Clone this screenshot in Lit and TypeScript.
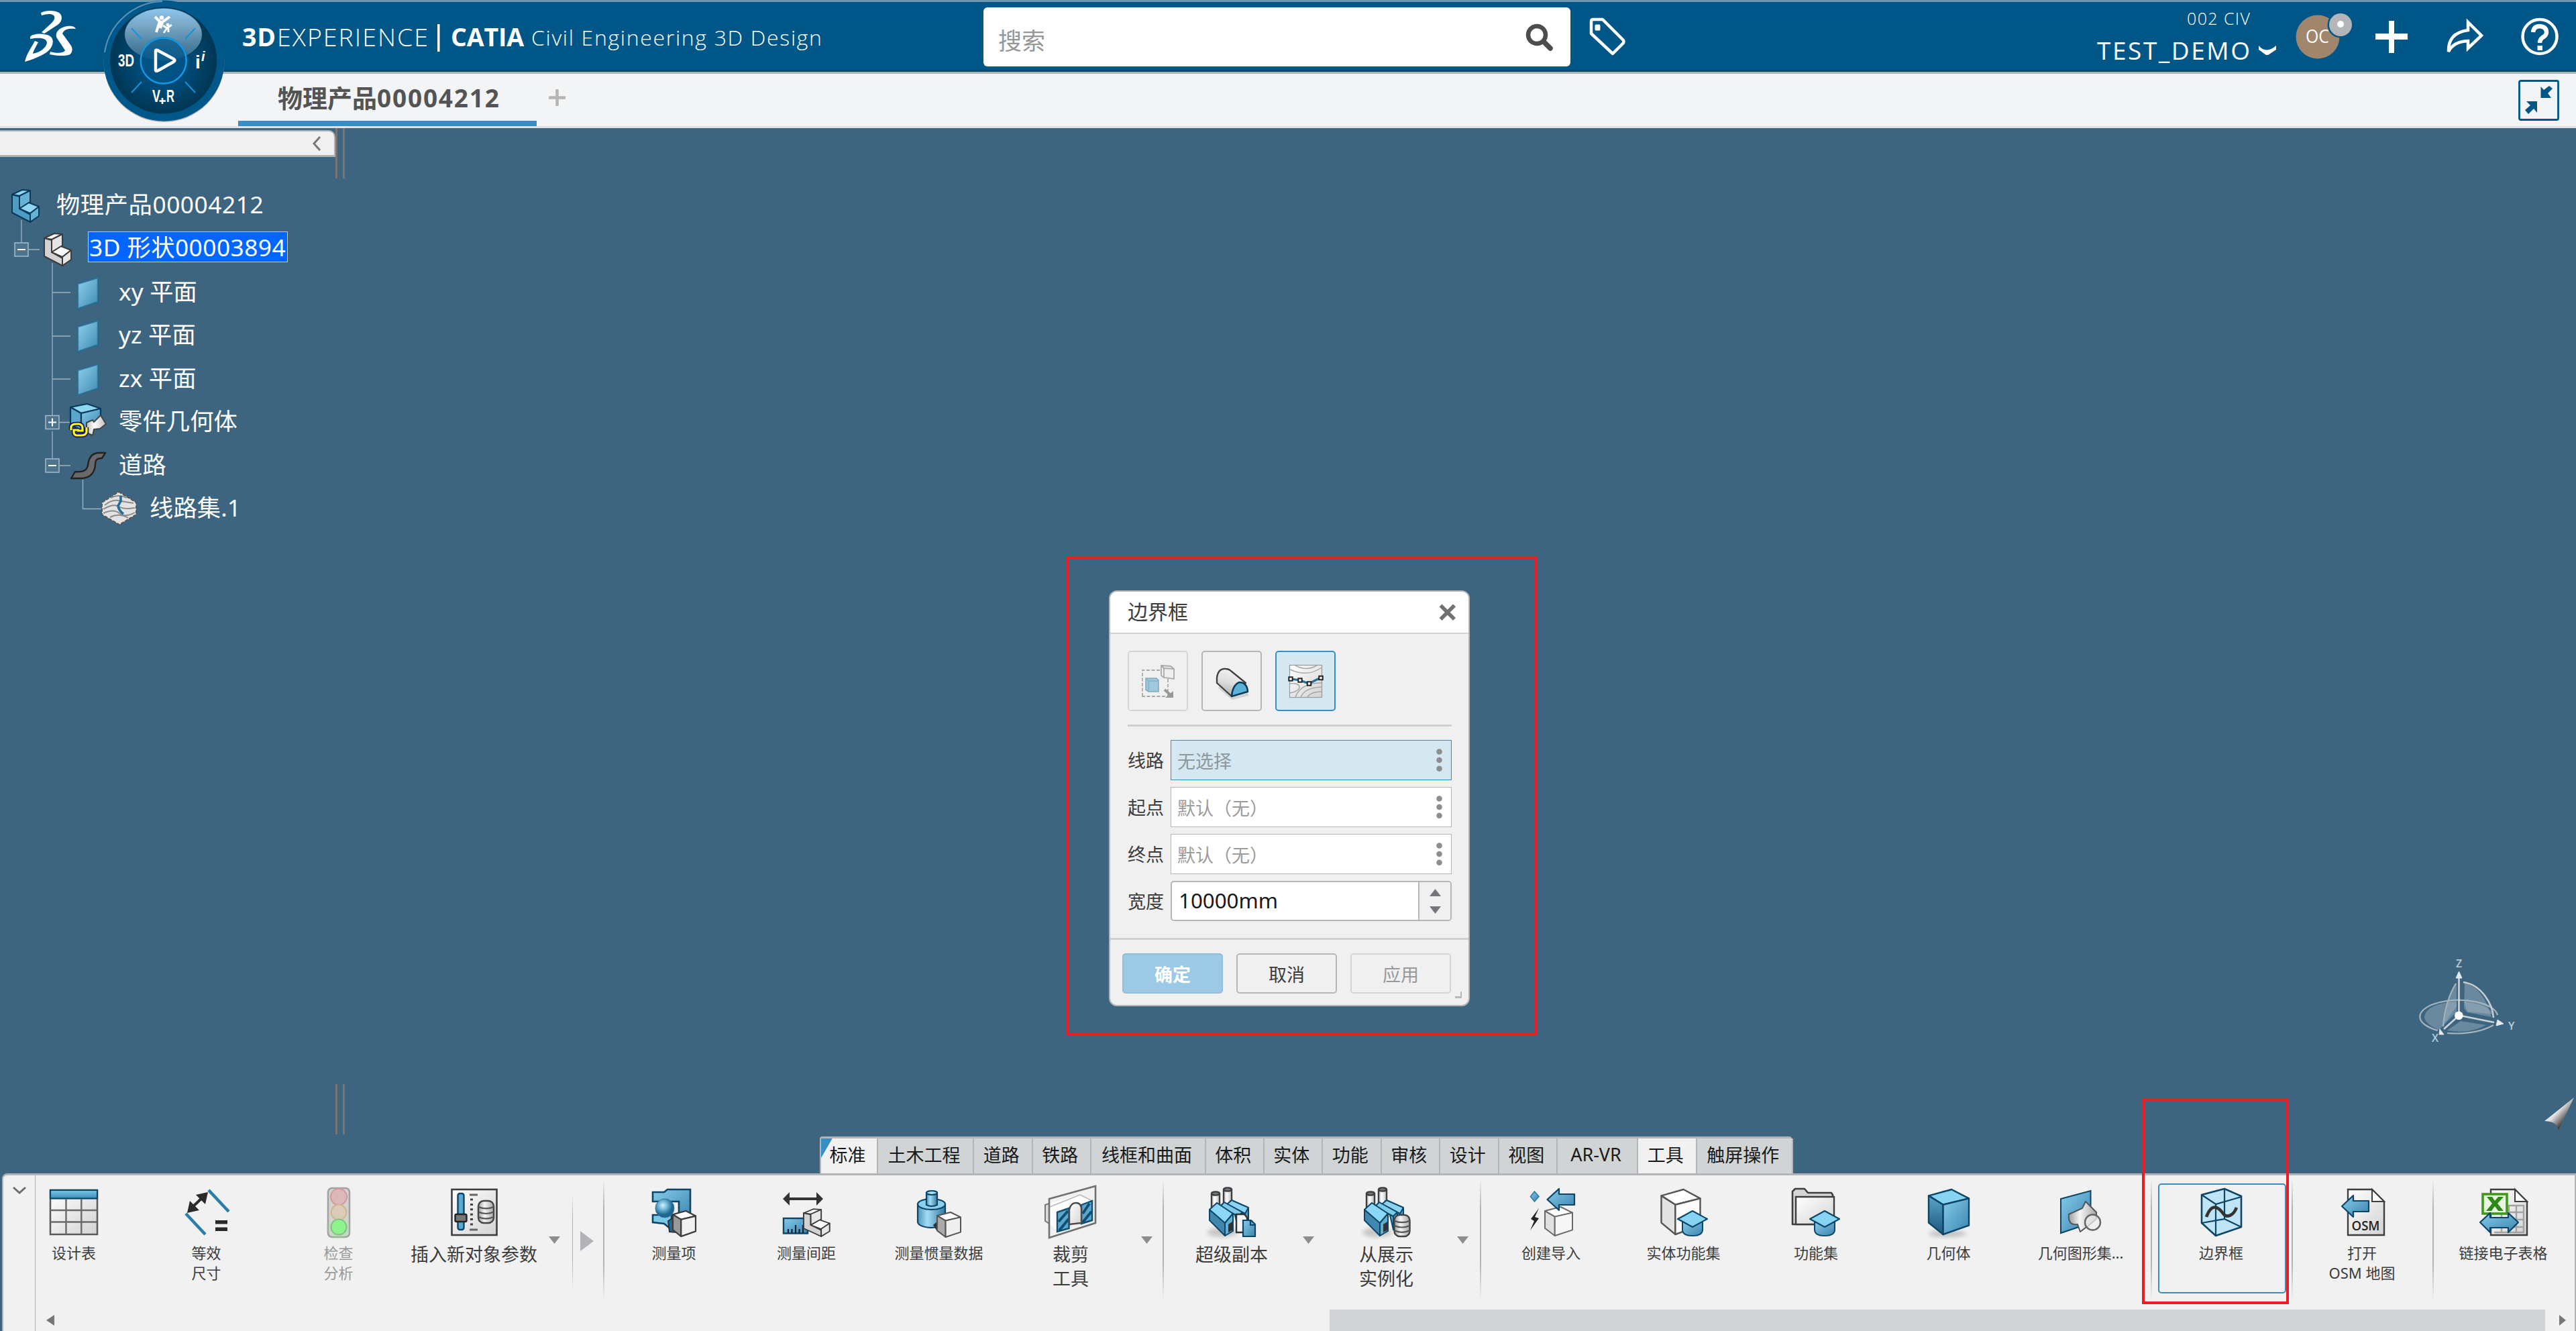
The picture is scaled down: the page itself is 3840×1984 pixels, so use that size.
import { LitElement, html, svg, css, nothing } from "lit";
import { customElement } from "lit/decorators.js";
import { classMap } from "lit/directives/class-map.js";
import { styleMap } from "lit/directives/style-map.js";

const NAVY = "#0c4566";
const INK = "#3c3f42";

// A light solid cube spanning the given box, used inside several tool icons.
const cube = (x: number, y: number, w: number, h: number, top: string, left: string, right: string, stroke: string, sw = 2) => {
  const p = (fx: number, fy: number) => `${x + w * fx} ${y + h * fy}`;
  return svg`
    <g stroke=${stroke} stroke-width=${sw} stroke-linejoin="round">
      <path fill=${top} d="M${p(0, 0.14)}L${p(0.57, 0)}L${p(1, 0.2)}L${p(0.36, 0.34)}Z" />
      <path fill=${left} d="M${p(0, 0.14)}L${p(0.36, 0.34)}L${p(0.36, 1)}L${p(0, 0.74)}Z" />
      <path fill=${right} d="M${p(0.36, 0.34)}L${p(1, 0.2)}L${p(1, 0.8)}L${p(0.36, 1)}Z" />
    </g>`;
};

const seat = (light: boolean) => {
  const s = light ? "#3b3b3b" : "#073a57";
  const a = light ? "#f8f8f8" : "#8fd6f3";
  const b = light ? "#d2d2d2" : "#4d9cc4";
  const c = light ? "#e6e6e6" : "#66b2d6";
  return svg`<g stroke=${s} stroke-width="2" stroke-linejoin="round">
    <path fill=${a} d="M2 9L17 2L29 3L14 11Z" />
    <path fill=${b} d="M2 9L13 12L13 30L29 39L29 50L2 36Z" />
    <path fill=${c} d="M13 11L29 3L29 20L13 30Z" />
    <path fill=${a} d="M13 30L27 21L42 27L29 37Z" />
    <path fill=${c} d="M29 37L42 27L42 41L29 50Z" />
  </g>`;
};

const factory = () => svg`
  <ellipse cx="26" cy="70" rx="22" ry="7" fill="#000" opacity=".18" filter="url(#soft)" />
  <g stroke=${INK} stroke-width="2.4">
    <path fill="url(#metal)" d="M10 13V40H22V13Z" /><ellipse cx="16" cy="12" rx="6" ry="2.6" fill="#777" />
    <path fill="url(#metal)" d="M28 7V34H40V7Z" /><ellipse cx="34" cy="6" rx="6" ry="2.6" fill="#777" />
  </g>
  <g stroke=${NAVY} stroke-width="2" stroke-linejoin="round">
    <path fill="url(#blue)" d="M38 23L65 34V60L50 66L44 40Z" />
    <path fill="#8ad3f1" d="M40 22L65 33L60 42L33 28Z" />
    <path fill="#7dc9ea" d="M29 25L56 40L50 46L22 32Z" />
    <path fill="url(#blue)" d="M50 46L56 40V64L50 66Z" />
    <path fill="#3f87ae" d="M7 36L30 55V75L7 52Z" />
    <path fill="#8ad8f6" d="M7 36L18 26L42 42L30 56Z" />
    <path fill="#62afd3" d="M30 56L42 42V68L30 75Z" />
  </g>
  <path d="M35 58L41 54V67L35 70Z" fill="#333" />`;

const coil = (x: number, y: number, w: number, h: number) => svg`
  <rect x=${x} y=${y} width=${w} height=${h} rx="8" fill="url(#metalh)" stroke="#444" stroke-width="2.4" />
  ${[0.27, 0.5, 0.73].map(
    (f) => svg`<path d="M${x} ${y + h * f}q${w / 2} 5 ${w} 0" fill="none" stroke="#555" stroke-width="2.2" />`,
  )}`;

const mortar = () => svg`
  <path d="M38 54V66Q38 75 53 75Q68 75 68 66V54Z" fill="url(#blue)" stroke=${NAVY} stroke-width="2" />
  <path d="M53 38L75 50L53 62L31 50Z" fill="#86d3f3" stroke=${NAVY} stroke-width="2" stroke-linejoin="round" />`;

const page = () => svg`
  <path d="M19 6H55L73 24V74H19Z" fill="url(#paper)" stroke=${INK} stroke-width="2.4" />
  <path d="M55 6V24H73Z" fill="#fff" stroke=${INK} stroke-width="2" />`;

const ICONS: Record<string, () => unknown> = {
  table: () => svg`
    <rect x="5" y="7" width="70" height="66" fill="url(#paper)" stroke="#5a5a5a" stroke-width="2.5" />
    <rect x="5" y="7" width="70" height="12.5" fill="url(#bluev)" stroke=${NAVY} stroke-width="2.2" />
    <path d="M28.5 20V73M51.3 20V73M5 37H75M5 54.5H75" stroke="#6a6a6a" stroke-width="2.4" />`,
  equiv: () => svg`
    <path d="M43 7L73 39M9 42L38 73" stroke="#2b7ea8" stroke-width="4.6" />
    <path d="M17 34L36 16" stroke="#2a2a2a" stroke-width="4" />
    <path d="M11 41L15 23L29 37ZM42 10L38 28L24 14Z" fill="#2a2a2a" />
    <path d="M53 52H71V57.5H53ZM53 62.5H71V68H53Z" fill="#2a2a2a" />`,
  light: () => svg`
    <rect x="24" y="4" width="32" height="73" rx="6" fill="#d3d3d3" stroke="#a2a2a2" stroke-width="2.6" />
    <circle cx="40" cy="17" r="12" fill="#dcb9b9" stroke="#d49a9a" stroke-width="2" />
    <circle cx="40" cy="40" r="11.4" fill="#dccbb8" stroke="#d3b48e" stroke-width="2" />
    <circle cx="40" cy="63" r="14" fill="#8df58a" opacity=".5" filter="url(#soft)" />
    <circle cx="40" cy="62" r="11.5" fill="#8cf48b" stroke="#8dbb8b" stroke-width="2" />`,
  params: () => svg`
    <rect x="6.5" y="6" width="67" height="68" fill="url(#paper)" stroke=${INK} stroke-width="2.6" />
    <rect x="15.5" y="12" width="9" height="54" rx="3" fill="#5aa9cf" stroke=${NAVY} stroke-width="2.4" />
    <rect x="11.5" y="43" width="17" height="11" rx="2" fill="#777" stroke="#222" stroke-width="2.4" />
    <path d="M33 14H45M33 66H45" stroke="#666" stroke-width="3" />
    <path d="M36 19.5V61" stroke="#444" stroke-width="4" stroke-dasharray="3 4.4" />
    ${coil(46, 23, 23, 33)}`,
  measure: () => svg`
    <path d="M8 10H25L30 6H64V52H47V24H8Z" fill="url(#blue)" stroke=${NAVY} stroke-width="2.6" />
    <path d="M8 44H36V66L25 57L8 55Z" fill="#7cc8ea" stroke=${NAVY} stroke-width="2.6" />
    <circle cx="26" cy="34" r="14" fill="url(#ball)" stroke="#3279a0" stroke-width="1" />
    <path d="M31 53L42 46V70L33 69Z" fill="#1d6b93" stroke="#333" stroke-width="2" />
    ${cube(38, 38, 34, 38, "#fff", "#999", "#f1f1f1", "#3d3d3d", 2.2)}`,
  between: () => svg`
    <path d="M14 20H56" stroke="#333" stroke-width="4" /><path d="M5 20L15 10V30ZM65 20L55 10V30Z" fill="#333" />
    <rect x="6" y="49" width="36" height="22.5" fill="url(#blue)" stroke=${NAVY} stroke-width="2.4" />
    <path d="M13 71V65M18.5 71V65M24 71V59M29.5 71V65M35 71V59" stroke="#123" stroke-width="2.2" />
    <g transform="translate(34 33.5) scale(.97 .85)">${seat(true)}</g>`,
  inertia: () => svg`
    <g stroke=${NAVY} stroke-width="2.2">
      <path d="M8 28V55Q10 62 28 63Q47 62 49 55V28Z" fill="url(#blueh)" />
      <ellipse cx="28.5" cy="28" rx="20.5" ry="8" fill="#8ad0ee" />
      <path d="M21 11V29Q29 33 37 29V11Z" fill="url(#blueh)" /><ellipse cx="29" cy="11" rx="8" ry="3" fill="#a3dff6" />
    </g>
    <path d="M31 59L43 49V70L36 67Z" fill="#333" />
    ${cube(37, 40, 35, 37, "#fff", "#aaa", "#efefef", "#555")}`,
  clip: () => svg`
    <path d="M2 29L8 27V57L2 53Z" fill="#ddd" stroke="#777" stroke-width="2" />
    <path d="M9 27L54 13L72 23L20 40V68L9 57Z" fill="#fff" opacity=".85" />
    <path d="M9 32L54 14L72 23" fill="none" stroke="#bbb" stroke-width="1.6" />
    <path d="M20 40L37.5 34V64L20 69ZM56 29L72 23V52L56 57Z" fill="#5ba7cc" stroke="#0f4f74" stroke-width="2.4" />
    <path d="M22 54L36 38M23 67L37 50M58 42L68 27M58 55L71 39" stroke="#0f4f74" stroke-width="4" />
    <path d="M38 60V36Q40 26 48 26Q55 26 56 34V56L38 58" fill="url(#paper)" stroke="#4a4a4a" stroke-width="2.4" />
    <path d="M8 20L77 1V56L8 78Z" fill="none" stroke="#707070" stroke-width="2.6" />`,
  supercopy: () => svg`${factory()}
    <path d="M47 43H59L63 48V70H47Z" fill="#f4f4f4" stroke="#333" stroke-width="2.4" />
    <path d="M57 52H69L75 58V76H57Z" fill="url(#blue)" stroke=${NAVY} stroke-width="2.2" /><path d="M68 52V59H75" fill="none" stroke=${NAVY} stroke-width="2.2" />`,
  instance: () => svg`${factory()}${coil(51.5, 44, 23, 32)}`,
  importer: () => svg`
    <path d="M15.5 9L22 16.5L15.5 24L9.5 16.5Z" fill="url(#blue)" stroke="#2b7ea8" stroke-width="1.6" />
    <path d="M22 34L10 50L15 53L9 67L22 49L16 47Z" fill="#222" />
    ${cube(31, 32, 41, 43, "#fff", "#e0e0e0", "#f6f6f6", "#6a6a6a")}
    <path d="M34.5 21L52 5V13H75V29H52V37Z" fill="url(#blue)" stroke=${NAVY} stroke-width="2.2" stroke-linejoin="round" />`,
  solidset: () => svg`${cube(6.5, 6, 58, 67, "#fff", "#e4e4e4", "#fbfbfb", "#555", 2.4)}${mortar()}`,
  featset: () => svg`
    <path d="M5 58V9L9 5H23L28 11H63L65 14V58Z" fill="#d6d6d6" stroke=${INK} stroke-width="2.6" stroke-linejoin="round" />
    <path d="M10 58V17H67V58Z" fill="url(#paper)" stroke=${INK} stroke-width="2.4" />${mortar()}`,
  body: () => svg`
    <ellipse cx="38" cy="72" rx="28" ry="5" fill="#000" opacity=".2" filter="url(#soft)" />
    ${cube(10, 6, 60, 67, "#86d3f3", "url(#bluedk)", "url(#blue)", NAVY, 2.4)}`,
  geoset: () => svg`
    <path d="M10 20L54.5 8V56L10 71Z" fill="url(#blue)" stroke=${NAVY} stroke-width="2" />
    <path d="M22 43L42 34L47 24L63 40V50L51 60L39 69L35 58Q20 60 22 43Z" fill="url(#metalh)" stroke="#555" stroke-width="2" stroke-linejoin="round" />
    <circle cx="57.5" cy="55" r="11.5" fill="#eee" fill-opacity=".75" stroke="#666" stroke-width="2.4" />`,
  bbox: () => svg`
    <path d="M11 14L45 5L70 16V62L32 75L11 56Z" fill="#bfe4f5" stroke=${NAVY} stroke-width="2.6" stroke-linejoin="round" />
    <path d="M11 14L32 28L70 17M32 28V75M45 5V50L11 56M45 50L70 62" fill="none" stroke=${NAVY} stroke-width="2.2" />
    <path d="M18 47C28 20 40 38 44 43S58 46 63 33" fill="none" stroke="#333" stroke-width="4.6" />`,
  osm: () => svg`${page()}
    <path d="M10 31L27 15V23H50V39H27V47Z" fill="url(#blue)" stroke=${NAVY} stroke-width="2.2" stroke-linejoin="round" />
    <text x="45.5" y="67" text-anchor="middle" textLength="42" lengthAdjust="spacingAndGlyphs" font-family="Open Sans, sans-serif" font-weight="600" font-size="20" fill="#222">OSM</text>`,
  excel: () => svg`
    <path d="M21 6H57L75 24V74H21Z" fill="url(#paper)" stroke=${INK} stroke-width="2.4" />
    <path d="M57 6V24H75Z" fill="#fff" stroke=${INK} stroke-width="2" />
    <path d="M26 40H71M26 51H71M26 62H71M48 30V70M59 30V70M70 30V70M37 42V70M46 30H71M26 70H71" stroke="#a2a2a2" stroke-width="2.4" />
    <rect x="9" y="13" width="36" height="29" fill="#e9f5e4" stroke="#3f9a1c" stroke-width="3.6" />
    <path d="M15 17H23L27 23L32 17H40L31 27L40 38H32L27 31L22 38H14L23 27Z" fill="#2f8a12" />
    <path d="M5 55L20 41V48H47V41L62 55L47 70V63H20V70Z" fill="url(#blue)" stroke=${NAVY} stroke-width="2.2" stroke-linejoin="round" />`,
};

const DEFS = svg`
  <defs>
    <linearGradient id="blue" x1="0" y1="0" x2="1" y2="1"><stop offset="0" stop-color="#86cbec" /><stop offset="1" stop-color="#3a84ad" /></linearGradient>
    <linearGradient id="bluedk" x1="0" y1="0" x2="0" y2="1"><stop offset="0" stop-color="#5aa5cb" /><stop offset="1" stop-color="#1c5579" /></linearGradient>
    <linearGradient id="bluev" x1="0" y1="0" x2="0" y2="1"><stop offset="0" stop-color="#7ccbea" /><stop offset="1" stop-color="#3a8ab4" /></linearGradient>
    <linearGradient id="blueh"><stop offset="0" stop-color="#4b97bf" /><stop offset=".35" stop-color="#a5dbf3" /><stop offset="1" stop-color="#33799f" /></linearGradient>
    <linearGradient id="paper" x1="0" y1="0" x2="1" y2="1"><stop offset="0" stop-color="#fff" /><stop offset="1" stop-color="#d3d3d3" /></linearGradient>
    <linearGradient id="metal"><stop offset="0" stop-color="#bbb" /><stop offset=".4" stop-color="#fff" /><stop offset="1" stop-color="#bbb" /></linearGradient>
    <linearGradient id="metalh"><stop offset="0" stop-color="#9a9a9a" /><stop offset=".4" stop-color="#f6f6f6" /><stop offset="1" stop-color="#a5a5a5" /></linearGradient>
    <linearGradient id="barrel" x1=".6" y1="0" x2=".3" y2="1"><stop offset="0" stop-color="#f4f4f4" /><stop offset=".5" stop-color="#dedede" /><stop offset="1" stop-color="#a9a9a9" /></linearGradient>
    <radialGradient id="ball" cx=".4" cy=".35"><stop offset="0" stop-color="#d6f1fc" /><stop offset=".5" stop-color="#6bb2d5" /><stop offset="1" stop-color="#1f668e" /></radialGradient>
    <radialGradient id="dial"><stop offset="0" stop-color="#00507f" /><stop offset=".5" stop-color="#004b77" /><stop offset="1" stop-color="#003653" /></radialGradient>
    <linearGradient id="lens" x1="0" y1="0" x2="0" y2="1"><stop offset="0" stop-color="#8cc6ee" /><stop offset=".35" stop-color="#7fabc8" stop-opacity=".95" /><stop offset="1" stop-color="#3f7396" stop-opacity=".75" /></linearGradient>
    <linearGradient id="plane" x1="0" y1="0" x2="1" y2="1"><stop offset="0" stop-color="#8dd0ee" /><stop offset="1" stop-color="#3f8bb0" /></linearGradient>
    <linearGradient id="dart" x1=".2" y1=".2" x2=".75" y2=".75"><stop offset="0" stop-color="#fff" /><stop offset=".45" stop-color="#e3dfe0" /><stop offset="1" stop-color="#2b2b2b" /></linearGradient>
    <filter id="soft" x="-50%" y="-50%" width="200%" height="200%"><feGaussianBlur stdDeviation="3" /></filter>
  </defs>`;

interface Tool { icon: string; lines: string[]; w: number; big?: boolean; off?: boolean; arrow?: number; active?: boolean }
interface Group { pad: number; w: number; tools: Tool[] }

const GROUPS: Group[] = [
  { w: 799, pad: 0, tools: [
    { icon: "table", lines: ["设计表"], w: 112 },
    { icon: "equiv", lines: ["等效", "尺寸"], w: 283 },
    { icon: "light", lines: ["检查", "分析"], w: 111, off: true },
    { icon: "params", lines: ["插入新对象参数"], w: 293, big: true, arrow: 119 },
  ] },
  { w: 832, pad: 5, tools: [
    { icon: "measure", lines: ["测量项"], w: 197 },
    { icon: "between", lines: ["测量间距"], w: 198 },
    { icon: "inertia", lines: ["测量惯量数据"], w: 197 },
    { icon: "clip", lines: ["裁剪", "工具"], w: 196, big: true, arrow: 113 },
  ] },
  { w: 471, pad: 0, tools: [
    { icon: "supercopy", lines: ["超级副本"], w: 202, big: true, arrow: 114 },
    { icon: "instance", lines: ["从展示", "实例化"], w: 259, big: true, arrow: 113 },
  ] },
  { w: 998, pad: 5, tools: [
    { icon: "importer", lines: ["创建导入"], w: 198 },
    { icon: "solidset", lines: ["实体功能集"], w: 197 },
    { icon: "featset", lines: ["功能集"], w: 198 },
    { icon: "body", lines: ["几何体"], w: 197 },
    { icon: "geoset", lines: ["几何图形集..."], w: 197 },
  ] },
  { w: 208, pad: 0, tools: [{ icon: "bbox", lines: ["边界框"], w: 206, active: true }] },
  { w: 208, pad: 0, tools: [{ icon: "osm", lines: ["打开", "OSM 地图"], w: 206 }] },
  { w: 207, pad: 0, tools: [{ icon: "excel", lines: ["链接电子表格"], w: 207 }] },
];

const TABS: [string, number][] = [
  ["标准", 85], ["土木工程", 143], ["道路", 87.5], ["铁路", 87.5], ["线框和曲面", 171], ["体积", 86.5], ["实体", 87.5],
  ["功能", 87.5], ["审核", 87.5], ["设计", 87.5], ["视图", 87.5], ["AR-VR", 120], ["工具", 87.5], ["触屏操作", 143.5],
];

const TREE: { icon: string; text: string; depth: number; selected?: boolean }[] = [
  { icon: "product", text: "物理产品00004212", depth: 0 },
  { icon: "shape", text: "3D 形状00003894", depth: 1, selected: true },
  { icon: "plane", text: "xy 平面", depth: 2 },
  { icon: "plane", text: "yz 平面", depth: 2 },
  { icon: "plane", text: "zx 平面", depth: 2 },
  { icon: "part", text: "零件几何体", depth: 2 },
  { icon: "road", text: "道路", depth: 2 },
  { icon: "route", text: "线路集.1", depth: 3 },
];

const TREE_ICONS: Record<string, () => unknown> = {
  product: () => svg`<g transform="translate(8 4)">${seat(false)}</g>`,
  shape: () => svg`<g transform="translate(8 4)">${seat(true)}</g>`,
  plane: () => svg`<path d="M15 17L45 8V44L15 54Z" fill="url(#plane)" stroke="#256a92" stroke-width="2.5" stroke-opacity=".75" />`,
  part: () => svg`
    <g stroke="#073a57" stroke-width="2.2" stroke-linejoin="round">
      <path fill="#8fd6f3" d="M4 8L29 3L49 10L20 17Z" /><path fill="#5ba6cb" d="M4 8L20 17V42L4 34Z" /><path fill="url(#blue)" d="M20 17L49 10V36L20 42Z" />
    </g>
    <path d="M28 31L37 27L39 30L49 20L57 33L48 40L39 41L37 50L28 46Z" fill="url(#metal)" stroke="#444" stroke-width="2" />
    <path d="M5 42V37Q6 33 13 33H17Q22 34 22 39V43H14M28 38V45Q27 50 20 50H13Q9 49 9 45V42H17" fill="none" stroke="#14146a" stroke-width="6.5" />
    <path d="M5 42V37Q6 33 13 33H17Q22 34 22 39V43H14M28 38V45Q27 50 20 50H13Q9 49 9 45V42H17" fill="none" stroke="#ff0" stroke-width="3.2" />`,
  road: () => svg`
    <path d="M5 49L11 39C22 40 28 38 30 30C31 18 36 12 45 11H56L51 19C43 19 41 22 41 29C40 42 32 49 20 49Z" fill="#696969" stroke="#222" stroke-width="2.4" stroke-linejoin="round" />`,
  route: () => svg`
    <path d="M30 5L56 21V39L31 54L5 39V21Z" fill="#e3e3e3" stroke="#555" stroke-width="2" stroke-dasharray="5 2" />
    <path d="M9 25Q20 16 29 18T52 22M7 31Q22 22 30 27T54 29M7 37Q22 30 31 37T54 36M17 43Q30 36 44 44M18 14Q30 8 42 14" fill="none" stroke="#8b8b8b" stroke-width="2" />
    <path d="M33 11V19L29 26Q30 33 37 38" fill="none" stroke="#1f7099" stroke-width="3.6" />`,
};

@customElement("app-root")
class AppRoot extends LitElement {
  static styles = css`
    :host { display: block; }
    * { box-sizing: border-box; }
    svg { display: block; overflow: visible; }
    .app { position: relative; width: 3840px; height: 1984px; overflow: hidden; display: flex; flex-direction: column; background: #3d657f; color: #3c3c3c;
      font-family: "Noto Sans", "Noto Sans CJK SC", sans-serif; white-space: nowrap; }
    .defs { position: absolute; width: 0; height: 0; }
    .header { height: 110px; flex: none; background: #005686; border-top: 3px solid #6b97b3; box-shadow: inset 0 -3px #b2b1b2, inset 0 -6px #004a72; display: flex; align-items: flex-start; padding-left: 36px; }
    .logo { width: 80px; height: 84px; margin-top: 10px; }
    .title { margin-left: 244px; margin-top: 19px; width: 872px; height: 60px; flex: none; }
    .search { margin-left: 234px; margin-top: 8px; width: 875px; height: 88px; flex: none; background: #fff; border-radius: 6px; display: flex; align-items: center; justify-content: space-between; padding: 6px 25px 0 22px; color: #969696; font-size: 35px; }
    .tag { margin: 21px 0 0 27px; flex: none; }
    .account { margin-left: 700px; margin-top: 10px; width: 272px; height: 80px; flex: none; }
    .avatar { margin-left: 25px; margin-top: 12px; flex: none; }
    .acts { display: flex; margin-left: 30px; margin-top: 22px; gap: 58px; align-items: center; }
    .compass { position: absolute; left: 20px; top: 0; }
    .doctabs { height: 81px; flex: none; background: #f3f4f6; border-bottom: 3px solid #e0e1e5; display: flex; align-items: stretch; padding-left: 355px; padding-right: 25px; }
    .doctab { width: 445px; border-bottom: 8px solid #368ec4; display: flex; align-items: center; padding: 0 0 0 59px; font-size: 37px; font-weight: 700; color: #545454; }
    .digits { letter-spacing: 1.8px; }
    .addtab { margin: 23px auto 0 18px; }
    .shrink { margin-top: 9px; }
    .stage { flex: 1; position: relative; }
    .panelbar { margin-top: 3px; width: 500px; height: 40px; background: #f0f0f0; border: solid #b0b4b5; border-width: 2px 2px 3px 0; border-radius: 0 10px 0 0; display: flex; justify-content: flex-end; align-items: center; padding-right: 19px; }
    .grip { position: absolute; left: 500px; width: 14px; height: 75px; border: solid #7b7472; border-width: 0 3px; }
    .grip.top { top: 0; } .grip.low { top: 1425px; }
    .tree { position: relative; margin-top: 41px; width: 500px; }
    .links { position: absolute; left: 0; top: 0; }
    .row { position: relative; height: 64.4px; display: flex; align-items: center; color: #fff; font-size: 35.3px; gap: 16px; }
    .d0 { padding-left: 8px; } .d1 { padding-left: 56px; } .d2 { padding-left: 101px; } .d3 { padding-left: 147px; }
    .lbl { line-height: 44px; letter-spacing: .1px; margin-top: -4px; }
    .d0 .lbl { letter-spacing: .55px; margin-top: -6px; } .d1 .lbl { letter-spacing: .45px; margin-top: -7px; }
    .lbl.sel { background: #0066ff; outline: 1px solid #b9cbe0; width: 296px; padding-left: 1px; }
    .mark { position: absolute; border: 4px solid #ed1c24; }
    .around-dialog { left: 1590px; top: 829px; width: 702px; height: 714px; }
    .around-bbox { left: 3193px; top: 1637px; width: 219px; height: 307px; }
    .dialog { position: absolute; left: 1653px; top: 880px; width: 538px; height: 620px; border: 2px solid #b2b6ba; border-radius: 12px; background: #f0f0f0; overflow: hidden; display: flex; flex-direction: column; }
    .dhead { height: 63px; flex: none; background: #fff; border-bottom: 2px solid #d0d4d4; display: flex; align-items: center; justify-content: space-between; padding: 0 18px 0 26px; font-size: 30px; }
    .dhead span { margin-top: -5px; }
    .dbody { padding: 25px 25px 25px 26px; display: flex; flex-direction: column; }
    .modes { display: flex; gap: 20px; padding-bottom: 20px; border-bottom: 3px solid #cdd1d1; margin-bottom: 20px; }
    .mode { width: 90px; height: 90px; border: 2px solid #b4b6ba; border-radius: 5px; }
    .mode.off { border-color: #d3d5d6; } .mode.on { border-color: #368ec4; background: #d5e8f2; }
    .fields { display: flex; flex-direction: column; gap: 10px; }
    .field { display: flex; height: 60px; align-items: center; font-size: 27px; }
    .flabel { width: 64px; margin-top: -1px; }
    .box { flex: 1; height: 60px; border: 1.5px solid #b4b6ba; background: #fff; color: #9b9b9b; display: flex; align-items: center; justify-content: space-between; padding: 0 13px 0 9px; }
    .box.on { border-color: #368ec4; background: #d5e8f2; color: #8d979c; }
    .box.num { border-width: 2px; border-radius: 5px; padding: 0; color: #191919; font-size: 31.3px; overflow: hidden; }
    .val { padding-left: 10px; margin-top: -3px; }
    .spin { width: 48px; height: 56px; border-left: 2px solid #b4b6ba; background: #f0f0f0; display: flex; flex-direction: column; align-items: center; justify-content: center; gap: 15px; }
    .dfoot { flex: 1; border-top: 3px solid #cdd1d1; display: flex; gap: 20px; padding: 20px 0 0 18px; }
    .btn { width: 150px; height: 60px; border: 2px solid #b4b6ba; border-radius: 5px; display: flex; align-items: center; justify-content: center; font-size: 27px; }
    .btn.ok { background: #9bc9e6; border-color: #93bedb; color: #fff; font-weight: 700; } .btn.off { border-color: #d3d5d6; color: #999; }
    .corner { position: absolute; right: 10px; bottom: 10px; width: 10px; height: 10px; border: solid #b4b6ba; border-width: 0 2.5px 3px 0; }
    .axis { position: absolute; left: 3560px; top: 1209px; }
    .tabs { flex: none; height: 55px; margin-left: 1222px; display: flex; position: relative; width: 1449px; border: solid #b3b3b8; border-width: 3px 0 0 2px; border-radius: 4px 4px 0 0; }
    .tab { background: #d0d4d5; border-right: 2px solid #b4b5b9; display: flex; align-items: center; justify-content: center; padding: 0 4px 5px 0; color: #191919; font-size: 27px; flex: none; }
    .tab.on { background: #f1f1f1; }
    .tab.first { background: linear-gradient(120deg, #368ec4 0 14px, #f1f1f1 15px); }
    .ribbon { flex: none; height: 235px; display: flex; margin-left: 3px; background: #f1f1f1; border: solid #b3b3b8; border-width: 3px 2px 0 2px; border-radius: 8px 0 0 0; }
    .fold { width: 48px; flex: none; border-right: 1.5px solid #b3b3b8; padding: 16px 0 0 13px; }
    .rmain { flex: 1; display: flex; flex-direction: column; min-width: 0; }
    .tools { height: 200px; display: flex; margin-left: 1px; }
    .group { flex: none; display: flex; }
    .sep { flex: none; width: 2px; height: 182px; margin-top: 4px; background: linear-gradient(#f1f1f1, #b3b3b8 25%, #b3b3b8 70%, #f1f1f1); }
    .sep.short { height: 146px; margin-top: 26px; width: 1px; }
    .more { width: 45px; flex: none; padding: 83px 0 0 11px; }
    .tool { position: relative; flex: none; padding-top: 15px; display: flex; flex-direction: column; align-items: center; font-size: 22px; }
    .tool.off { color: #9a9a9a; }
    .cap { display: flex; flex-direction: column; align-items: center; line-height: 30px; margin-top: 5px; }
    .big .cap { font-size: 27px; line-height: 36px; margin-top: 5px; }
    .drop { position: absolute; top: 91px; left: 50%; }
    .active::before { content: ""; position: absolute; left: 9px; top: 12px; width: 187px; height: 160px; border: 2.5px solid #368ec4; border-radius: 5px; }
    .scroll { height: 32px; display: flex; align-items: center; justify-content: space-between; padding: 0 12px 0 16px; }
    .thumb { width: 1812px; height: 32px; background: #d0d4d5; margin: 0 21px 0 auto; }
  `;

  private header() {
    const f = "Open Sans, Noto Sans, sans-serif";
    return html`<div class="header">
      <svg class="logo" viewBox="0 0 80 84" fill="#fff" stroke="none">
        <path d="M25 6C32 2 46 2 52 6C58 10 57 19 50 24L30 37L26 35L38 24C45 18 47 13 44 10C40 7 33 8 26 10Z" />
        <path d="M9 42C12 36 34 36 40 42C46 48 42 60 32 66C24 71 12 76 1 79C4 66 12 56 16 48L21 50C18 56 14 62 13 67C24 65 33 58 34 51C34 44 24 42 9 45Z" />
        <path d="M77 30C64 29 60 31 57 37L70 55C74 62 70 68 66 69C58 71 46 70 38 68L39 64C48 67 60 66 61 62L49 44C45 36 52 29 60 27C66 25 75 25 77 30Z" />
      </svg>
      <svg class="title" viewBox="0 0 872 60" fill="#fff" font-family=${f}>
        <text x="1" y="47" font-size="37.5" font-weight="700" textLength="50">3D</text>
        <text x="53" y="47" font-size="37.5" font-weight="300" textLength="225">EXPERIENCE</text>
        <rect x="292" y="14" width="3.5" height="41" />
        <text x="312" y="47" font-size="37.5" font-weight="700" textLength="109">CATIA</text>
        <text x="432" y="46" font-size="32" font-weight="300" textLength="433">Civil Engineering 3D Design</text>
      </svg>
      <div class="search"><span>搜索</span>
        <svg width="42" height="42" viewBox="0 0 42 42" fill="none" stroke="#4d4d4d"><circle cx="17" cy="15" r="13" stroke-width="6.5" /><path d="M27 25L37 35" stroke-width="7.5" stroke-linecap="round" /></svg>
      </div>
      <svg class="tag" width="56" height="58" viewBox="0 0 56 58" fill="none" stroke="#fff" stroke-width="4.5" stroke-linejoin="round">
        <path d="M4 8Q4 5 7 5H21L52 36Q53 38 52 40L36 56L4 26Z" /><rect x="11" y="14" width="5" height="6" fill="#fff" stroke-width="3" /></svg>
      <svg class="account" viewBox="0 0 272 80" fill="#fff" font-family=${f}>
        <text x="136" y="24" font-size="25" font-weight="300" textLength="94">002 CIV</text>
        <text x="2" y="76" font-size="37" textLength="228">TEST_DEMO</text>
        <path d="M243 55Q254 68 269 55V61L257 69H254L243 61Z" />
      </svg>
      <svg class="avatar" width="90" height="76" viewBox="0 0 90 76" font-family=${f}>
        <circle cx="34" cy="40" r="32.5" fill="#a0866c" /><text x="16" y="49" font-size="28" fill="#fff" textLength="35" lengthAdjust="spacingAndGlyphs">OC</text>
        <circle cx="68" cy="22" r="19.5" fill="#005686" /><circle cx="68" cy="22" r="17" fill="#b3b5b8" /><circle cx="68" cy="21" r="5" fill="#fff" />
      </svg>
      <div class="acts">
        <svg width="48" height="58" viewBox="0 0 48 58"><path d="M20 6H28V25H48V34H28V54H20V34H0V25H20Z" fill="#fff" /></svg>
        <svg width="56" height="58" viewBox="0 0 56 58" fill="none" stroke="#fff" stroke-width="4.5"><path d="M32 8L52 28L32 47V36Q10 37 3 52Q2 24 32 20Z" /></svg>
        <svg width="56" height="58" viewBox="0 0 56 58" fill="none" stroke="#fff"><circle cx="25" cy="29.5" r="25.5" stroke-width="4.5" /><path d="M15 23Q16 14 25 14Q35 15 35 23Q35 28 29 31Q25 34 25 39" stroke-width="6.5" /><path d="M21.5 43H29V50H21.5Z" fill="#fff" stroke="none" /></svg>
      </div>
    </div>`;
  }

  private compass() {
    return html`<svg class="compass" width="330" height="190" viewBox="0 0 330 190">
      <circle cx="224.5" cy="92" r="90" fill="#999" opacity=".75" />
      <circle cx="224.5" cy="90.5" r="90" fill="#00578a" />
      <path d="M136 78A90 90 0 0 1 222 2" fill="none" stroke="#5d93b6" stroke-width="2" />
      <circle cx="223.7" cy="90" r="79.5" fill="url(#dial)" />
      <ellipse cx="223.5" cy="51.5" rx="58" ry="39.5" fill="url(#lens)" stroke="#00344f" stroke-width="1.5" stroke-opacity=".6" />
      <path d="M176 42L191 58M271 42L256 58M176 138L191 122M271 138L256 122" stroke="#1494dc" stroke-width="2" />
      <circle cx="223.7" cy="90.5" r="35.5" fill="#00568a" fill-opacity=".7" /><circle cx="223.7" cy="90.5" r="34" fill="none" stroke="#139ae6" stroke-width="2.5" />
      <path d="M212 76V105Q213 107 216 105L239 92Q242 90 239 88L215 75Q212 74 212 76Z" fill="none" stroke="#fff" stroke-width="4.5" />
      <g fill="#fff" font-family="Liberation Sans, sans-serif" font-weight="700">
        <text x="156" y="99" font-size="25" textLength="24" lengthAdjust="spacingAndGlyphs">3D</text>
        <text x="207" y="152" font-size="25" textLength="12" lengthAdjust="spacingAndGlyphs">V</text>
        <text x="228" y="152" font-size="25" textLength="12" lengthAdjust="spacingAndGlyphs">R</text>
        <text x="271" y="102" font-size="28">i</text><text x="280" y="91" font-size="20" font-style="italic">i</text>
      </g>
      <path d="M222 146V155M217.5 150.5H227" stroke="#fff" stroke-width="2.6" />
      <g fill="none" stroke="#fff"><path d="M211 25L218 32L213 48M218 33H222L233 25M222 33L219 42" stroke-width="4" /><path d="M223 38L229 42L236 37M229 42L224 49M231 42L231 48" stroke-width="2.8" /></g>
      <circle cx="221" cy="26.5" r="3.2" fill="#fff" /><circle cx="230" cy="37" r="2.4" fill="#fff" />
    </svg>`;
  }

  private tree() {
    const exp = (x: number, y: number, plus: boolean) => svg`
      <rect x=${x - 10} y=${y - 10} width="20" height="20" fill="#5f849b" fill-opacity=".5" stroke="#a9bac6" stroke-width="1.5" />
      <path d="M${x - 6} ${y}H${x + 6}${plus ? `M${x} ${y - 6}V${y + 6}` : ""}" stroke="#fff" stroke-width="2" />`;
    return html`<div class="tree">
      <svg class="links" width="500" height="520" viewBox="0 275 500 520" fill="none" stroke="#9fb3c1" stroke-width="1.3">
        <path d="M32 328V361M43 372H59M78 392V619M78 643V683M78 436H105M78 501H105M78 565H105M89 629.5H105M89 694H105M123.5 715V758.5H152" />
        ${exp(32, 372, false)}${exp(78, 629.5, true)}${exp(78, 694, false)}
      </svg>
      ${TREE.map((r) => html`<div class="row d${r.depth}">
        <svg width="60" height="60" viewBox="0 0 60 60">${TREE_ICONS[r.icon]()}</svg>
        <span class=${classMap({ lbl: true, sel: !!r.selected })}>${r.text}</span></div>`)}
    </div>`;
  }

  private axis() {
    return html`<svg class="axis" width="280" height="320" viewBox="0 0 280 320">
      <g fill="#a9bccb" fill-opacity=".42">
        <path d="M102 65V100L84 125Q88 86 102 65ZM114 65Q142 72 154 116L118 109L113 103Z" />
        <path d="M54 116Q56 96 102 93V108L76 135Q56 128 54 116ZM113 93Q148 97 158 112L118 108ZM108 122L146 128Q120 142 88 136Z" />
      </g>
      <g fill="none" stroke="#a5b4bd" stroke-width="2.2">
        <path d="M74 136A58 24.5 0 1 1 163 113M157 128Q130 143 88 140" /><path d="M112 64C140 68 156 98 157 117" stroke="#c3cbd0" stroke-width="2.6" /><path d="M101 66Q85 92 82 130" />
      </g>
      <path d="M105.5 108V58M108 114L158 124M103 116L83 134" stroke="#ccd4d9" stroke-width="2.6" />
      <path d="M105.5 48L101 58H110ZM172 126L163 120L161 129ZM76 142L77 134L83 142Z" fill="#e6eaed" stroke="#dfe5e9" />
      <circle cx="105.3" cy="113.7" r="6.3" fill="#fff" />
      <g fill="#bccbd6" font-family="Open Sans, sans-serif" font-size="16" font-weight="600"><text x="101" y="42">Z</text><text x="179" y="135">Y</text><text x="65" y="153">X</text></g>
      <path d="M277 236L254 284L251 278Q246 271 233 271Z" fill="url(#dart)" />
    </svg>`;
  }

  private dialog() {
    const dots = html`<svg width="9" height="35" viewBox="0 0 9 35" fill="#8e8e8e"><circle cx="4.5" cy="4.5" r="4.3" /><circle cx="4.5" cy="17" r="4.3" /><circle cx="4.5" cy="29.7" r="4.3" /></svg>`;
    const pick = (l: string, v: string, on = false) => html`<div class="field"><span class="flabel">${l}</span><div class=${classMap({ box: true, on })}><span>${v}</span>${dots}</div></div>`;
    return html`<div class="dialog">
      <div class="dhead"><span>边界框</span><svg width="26" height="26" viewBox="0 0 26 26"><path d="M2.5 2.5L23 23M23 2.5L2.5 23" stroke="#6f7072" stroke-width="5.5" /></svg></div>
      <div class="dbody">
        <div class="modes">
          <div class="mode off"><svg width="86" height="86" viewBox="0 0 86 86">
            <path d="M20 66V27H58V66Z" fill="none" stroke="#a9a9a9" stroke-width="1.8" stroke-dasharray="5 2.5" />
            <path d="M48 20L62 21L67 25V40L52 38L48 35ZM52 38V24L67 25M52 24L48 20" fill="#eee" stroke="#aaa" stroke-width="1.8" />
            <path d="M25 39H41L44 42V59H29L25 56Z" fill="#9fc8dc" stroke="#7ea9be" stroke-width="1.5" /><path d="M25 39L29 43H44M29 43V59" fill="none" stroke="#87b0c4" stroke-width="1.5" />
            <path d="M53 56L63 65" stroke="#999" stroke-width="4" /><path d="M66 58V68H54Z" fill="#999" /></svg></div>
          <div class="mode"><svg width="86" height="86" viewBox="0 0 86 86" stroke-linejoin="round">
            <path d="M24 52L44 69L68 63" stroke="#000" stroke-opacity=".12" stroke-width="4" fill="none" />
            <path d="M21 46V38Q23 24 34 25Q39 25 43 29L64 46L43 66Z" fill="url(#barrel)" stroke="#3f3f3f" stroke-width="2.3" />
            <path d="M43 66Q44 50 54 45Q66 45 67 59Z" fill="#5cb2d8" stroke="#0b3c57" stroke-width="2.5" /></svg></div>
          <div class="mode on"><svg width="86" height="86" viewBox="0 0 86 86">
            <rect x="19.5" y="19.5" width="48" height="48" fill="url(#paper)" stroke="#999" stroke-width="1.2" />
            <path d="M20 26Q46 38 67 23M28 20Q45 29 60 20M20 47Q34 46 34 52T20 61M36 67Q42 53 67 52M28 67Q36 46 67 46M46 67Q51 59 67 59" fill="none" stroke="#a8a8a8" stroke-width="1.5" />
            <path d="M21 40L35 42L48 47L66 38" fill="none" stroke="#1e6f99" stroke-width="3.2" />
            ${[[21, 40], [35, 42], [48.5, 47], [66, 38.5]].map(([x, y]) => svg`<rect x=${x - 2.7} y=${y - 2.7} width="5.4" height="5.4" fill="#fff" stroke="#222" stroke-width="2" />`)}</svg></div>
        </div>
        <div class="fields">
          ${pick("线路", "无选择", true)}${pick("起点", "默认（无）")}${pick("终点", "默认（无）")}
          <div class="field"><span class="flabel">宽度</span><div class="box num"><span class="val">10000mm</span>
            <div class="spin"><svg width="17" height="11" viewBox="0 0 17 11"><path d="M8.5 0L17 11H0Z" fill="#76777a" /></svg><svg width="17" height="11" viewBox="0 0 17 11"><path d="M0 0H17L8.5 11Z" fill="#76777a" /></svg></div></div></div>
        </div>
      </div>
      <div class="dfoot"><div class="btn ok">确定</div><div class="btn">取消</div><div class="btn off">应用</div></div>
      <div class="corner"></div>
    </div>`;
  }

  private tool(t: Tool) {
    return html`<div class=${classMap({ tool: true, big: !!t.big, off: !!t.off, active: !!t.active })} style=${styleMap({ width: `${t.w}px` })}>
      <svg width="80" height="80" viewBox="0 0 80 80">${ICONS[t.icon]()}</svg>
      <div class="cap">${t.lines.map((l) => html`<span>${l}</span>`)}</div>
      ${t.arrow ? html`<svg class="drop" width="17" height="11" viewBox="0 0 17 11" style=${styleMap({ marginLeft: `${t.arrow - 8}px` })}><path d="M0 0H17L8.5 11Z" fill="#8c8d8e" /></svg>` : nothing}
    </div>`;
  }

  private ribbon() {
    return html`
      <div class="tabs">${TABS.map(([t, w], i) => html`<div class=${classMap({ tab: true, on: t === "工具", first: i === 0 })} style=${styleMap({ width: `${w}px` })}>${t}</div>`)}</div>
      <div class="ribbon">
        <div class="fold"><svg width="22" height="13" viewBox="0 0 22 13"><path d="M2 2L11 10L20 2" fill="none" stroke="#6b6d70" stroke-width="3" /></svg></div>
        <div class="rmain">
          <div class="tools">
            ${GROUPS.map((g, gi) => html`
              <div class="group" style=${styleMap({ width: `${g.w}px`, paddingLeft: `${g.pad}px` })}>${g.tools.map((t) => this.tool(t))}</div>
              ${gi === 0 ? html`<div class="sep short"></div><div class="more"><svg width="20" height="30" viewBox="0 0 20 30"><path d="M0 0L20 15L0 30Z" fill="#b1b3b8" /></svg></div>` : nothing}
              ${gi < GROUPS.length - 1 ? html`<div class="sep"></div>` : nothing}`)}
          </div>
          <div class="scroll">
            <svg width="12" height="16" viewBox="0 0 12 16"><path d="M12 0L0 8L12 16Z" fill="#76777a" /></svg>
            <div class="thumb"></div>
            <svg width="11" height="16" viewBox="0 0 11 16"><path d="M0 0L10 8L0 16Z" fill="#76777a" /></svg>
          </div>
        </div>
      </div>`;
  }

  render() {
    return html`<div class="app">
      <svg class="defs">${DEFS}</svg>
      ${this.header()}
      <div class="doctabs">
        <div class="doctab">物理产品<span class="digits">00004212</span></div>
        <svg class="addtab" width="25" height="25" viewBox="0 0 25 25"><path d="M12.5 0V25M0 12.5H25" stroke="#b5b5b5" stroke-width="4.5" /></svg>
        <svg class="shrink" width="61" height="61" viewBox="0 0 61 61"><rect x="1.5" y="1.5" width="58" height="58" rx="2" fill="none" stroke="#005686" stroke-width="2.8" />
          <path d="M33.5 10L38 15L46 9L51 13L44 20L49 27H33.5ZM28 49V32H12L18 38L10 45L15 51L23 43Z" fill="#005686" /></svg>
      </div>
      <div class="stage">
        <div class="panelbar"><svg width="14" height="22" viewBox="0 0 14 22"><path d="M12 1L3 11L12 21" fill="none" stroke="#77767a" stroke-width="3" /></svg></div>
        <div class="grip top"></div><div class="grip low"></div>
        ${this.tree()}${this.axis()}
      </div>
      ${this.ribbon()}
      ${this.compass()}${this.dialog()}
      <div class="mark around-dialog"></div><div class="mark around-bbox"></div>
    </div>`;
  }
}
